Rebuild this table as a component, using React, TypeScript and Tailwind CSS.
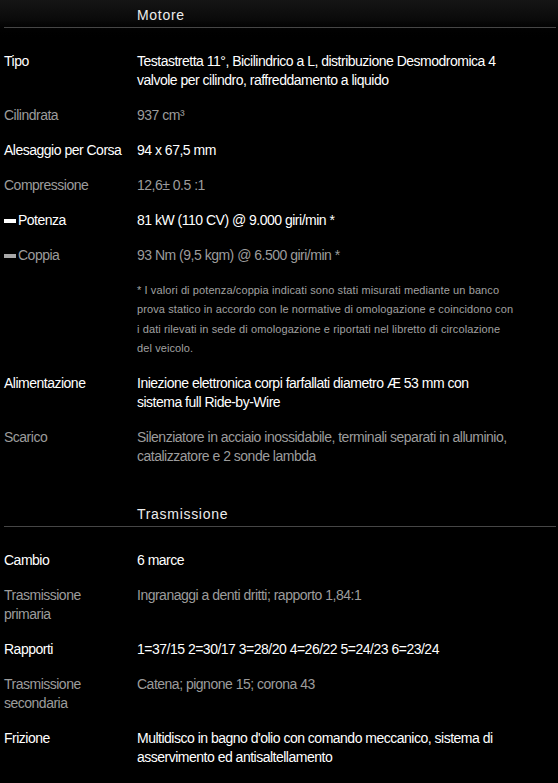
import React from "react";

type Row = { label: string; value: string; strong?: boolean; marker?: "white" | "gray"; note?: string[] };

const motore: Row[] = [
  { label: "Tipo", value: "Testastretta 11°, Bicilindrico a L, distribuzione Desmodromica 4 valvole per cilindro, raffreddamento a liquido", strong: true },
  { label: "Cilindrata", value: "937 cm³" },
  { label: "Alesaggio per Corsa", value: "94 x 67,5 mm", strong: true },
  { label: "Compressione", value: "12,6± 0.5 :1" },
  { label: "Potenza", value: "81 kW (110 CV) @ 9.000 giri/min *", strong: true, marker: "white" },
  {
    label: "Coppia",
    value: "93 Nm (9,5 kgm) @ 6.500 giri/min *",
    marker: "gray",
    note: [
      "* I valori di potenza/coppia indicati sono stati misurati mediante un banco",
      "prova statico in accordo con le normative di omologazione e coincidono con",
      "i dati rilevati in sede di omologazione e riportati nel libretto di circolazione",
      "del veicolo.",
    ],
  },
  { label: "Alimentazione", value: "Iniezione elettronica corpi farfallati diametro Æ 53 mm con sistema full Ride-by-Wire", strong: true },
  { label: "Scarico", value: "Silenziatore in acciaio inossidabile, terminali separati in alluminio, catalizzatore e 2 sonde lambda" },
];

const trasmissione: Row[] = [
  { label: "Cambio", value: "6 marce", strong: true },
  { label: "Trasmissione primaria", value: "Ingranaggi a denti dritti; rapporto 1,84:1" },
  { label: "Rapporti", value: "1=37/15 2=30/17 3=28/20 4=26/22 5=24/23 6=23/24", strong: true },
  { label: "Trasmissione secondaria", value: "Catena; pignone 15; corona 43" },
  { label: "Frizione", value: "Multidisco in bagno d'olio con comando meccanico, sistema di asservimento ed antisaltellamento", strong: true },
];

function Section({ title, rows, first }: { title: string; rows: Row[]; first?: boolean }) {
  return (
    <section className={first ? "bg-gradient-to-b from-[#151515] via-[#0a0a0a] to-black bg-no-repeat bg-[length:100%_40px]" : "mt-[25px]"}>
      <div className="pl-[4px] pr-[2px]">
        <div className="border-b border-[#464646] pl-[133px] pt-[8px] pb-[4px] text-[14px] leading-[15px] tracking-[0.7px] text-[#ececec]">
          {title}
        </div>
      </div>
      <div className="pt-[16px]">
        {rows.map((r) => (
          <div key={r.label}>
            <div className={`flex py-[8px] ${r.strong ? "text-white" : "text-[#9c9c9c]"}`}>
              <div className="w-[137px] shrink-0 pl-[4px] flex items-center self-start">
                {r.marker && (
                  <span className={`inline-block shrink-0 w-[12px] h-[4px] mr-[2px] ${r.marker === "white" ? "bg-white" : "bg-[#a8a8a8]"}`} />
                )}
                <span className="max-w-[123px]">{r.label}</span>
              </div>
              <div className="w-[374px]">{r.value}</div>
            </div>
            {r.note && (
              <div className="pl-[137px] py-[8px] text-[11px] leading-[19.25px] tracking-[0.1px] text-[#a0a0a0] whitespace-nowrap">
                {r.note.map((l) => (
                  <div key={l}>{l}</div>
                ))}
              </div>
            )}
          </div>
        ))}
      </div>
    </section>
  );
}

export default function App() {
  return (
    <div
      className="bg-black w-[558px] min-h-[783px] text-[14px] leading-[19px] tracking-[-0.5px] overflow-hidden"
      style={{ fontFamily: '"Liberation Sans", Arial, sans-serif' }}
    >
      <Section title="Motore" rows={motore} first />
      <Section title="Trasmissione" rows={trasmissione} />
    </div>
  );
}
